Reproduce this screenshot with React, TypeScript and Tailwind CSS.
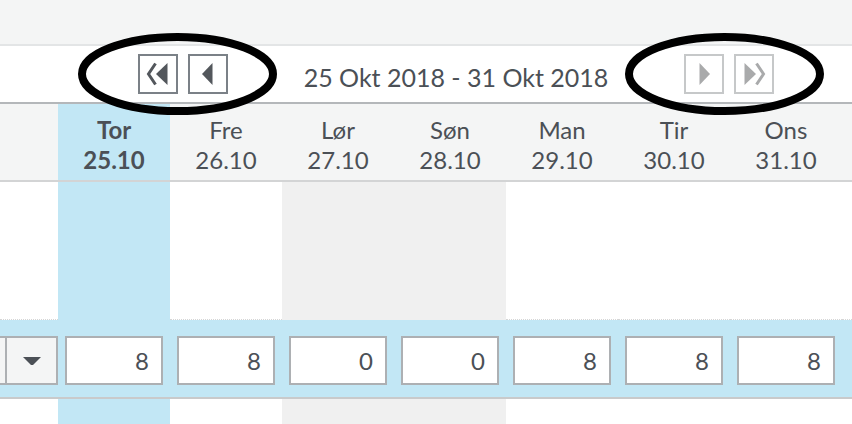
import { memo } from 'react'

type Day = {
  name: string
  date: string
  value: number
  today?: boolean
  weekend?: boolean
}

const DAYS: Day[] = [
  { name: 'Tor', date: '25.10', value: 8, today: true },
  { name: 'Fre', date: '26.10', value: 8 },
  { name: 'Lør', date: '27.10', value: 0, weekend: true },
  { name: 'Søn', date: '28.10', value: 0, weekend: true },
  { name: 'Man', date: '29.10', value: 8 },
  { name: 'Tir', date: '30.10', value: 8 },
  { name: 'Ons', date: '31.10', value: 8 },
]

function bodyBg(day: Day) {
  if (day.today) return 'bg-[#c2e7f5]'
  if (day.weekend) return 'bg-[#f0f0f0]'
  return 'bg-white'
}

function NavButton({ kind, disabled }: { kind: 'first' | 'prev' | 'next' | 'last'; disabled?: boolean }) {
  const color = disabled ? '#a9aaab' : '#53575c'
  const flip = kind === 'next' || kind === 'last'
  return (
    <button
      type="button"
      className={
        'flex h-10 w-10 items-center justify-center border-2 bg-white ' +
        (disabled ? 'border-[#c6c8c9]' : 'border-[#7b8187]')
      }
    >
      <svg width="24" height="24" viewBox="0 0 24 24" style={flip ? { transform: 'scaleX(-1)' } : undefined}>
        {kind === 'first' || kind === 'last' ? (
          <>
            <polyline points="9.5,1.5 2.5,12 9.5,22.5" fill="none" stroke={color} strokeWidth="3" />
            <polygon points="21.5,1 21.5,23 10,12" fill={color} />
          </>
        ) : (
          <polygon points="16.5,1 16.5,23 6,12" fill={color} />
        )}
      </svg>
    </button>
  )
}

function WeekNav() {
  return (
    <div className="flex h-[58px] items-center border-b-2 border-[#b4b7ba] bg-white pl-[138px]">
      <div className="flex gap-[10px]">
        <NavButton kind="first" />
        <NavButton kind="prev" />
      </div>
      <div className="w-[456px] pt-[6px] text-center text-[25px] leading-[31px]">25 Okt 2018 - 31 Okt 2018</div>
      <div className="flex gap-[10px]">
        <NavButton kind="next" disabled />
        <NavButton kind="last" disabled />
      </div>
    </div>
  )
}

function HeaderRow() {
  return (
    <div className="flex h-[78px] border-b-2 border-[#d3d4d5] bg-[#f4f5f5]">
      <div className="w-[58px] shrink-0" />
      {DAYS.map((d) => (
        <div
          key={d.name}
          className={
            'w-[112px] shrink-0 pt-[11px] text-center text-[24px] leading-[30px] ' +
            (d.today ? 'bg-[#c2e7f5] font-bold' : '')
          }
        >
          <div>{d.name}</div>
          <div>{d.date}</div>
        </div>
      ))}
      <div className="flex-1" />
    </div>
  )
}

function BodyRow({ height, dotted }: { height: string; dotted?: boolean }) {
  const line = dotted ? ' border-b border-dotted border-[#d6d6d6]' : ''
  return (
    <div className={'flex ' + height}>
      <div className={'w-[58px] shrink-0 bg-white' + line} />
      {DAYS.map((d) => (
        <div
          key={d.name}
          className={'w-[112px] shrink-0 ' + bodyBg(d) + (d.today || d.weekend ? '' : line)}
        />
      ))}
      <div className={'flex-1 bg-white' + line} />
    </div>
  )
}

function HoursRow() {
  return (
    <div className="flex h-[79px] border-b-2 border-[#c9cacb] bg-[#c2e7f5] pt-[16px]">
      <div className="w-[58px] shrink-0">
        <div className="flex h-[49px] border-y-2 border-r-2 border-[#adb0b3] bg-[#f4f5f5]">
          <div className="w-[7px] border-r-2 border-[#adb0b3]" />
          <div className="flex flex-1 items-center justify-center">
            <svg width="18" height="10" viewBox="0 0 18 10">
              <polygon points="0,1 18,1 10,9 8,9" fill="#4b5056" />
            </svg>
          </div>
        </div>
      </div>
      {DAYS.map((d) => (
        <div key={d.name} className="w-[112px] shrink-0 px-[7px]">
          <input
            type="text"
            readOnly
            value={d.value}
            className="h-[49px] w-full border-2 border-[#adb0b3] bg-white pr-3 text-right font-['Lato'] text-[24px] text-[#4b5056] outline-none"
          />
        </div>
      ))}
      <div className="flex-1" />
    </div>
  )
}

function App() {
  return (
    <div className="relative h-[424px] w-[852px] overflow-hidden bg-white font-['Lato',sans-serif] text-[#4b5056]">
      <div className="h-[46px] border-b-2 border-[#e3e5e6] bg-[#f4f5f5]" />
      <WeekNav />
      <HeaderRow />
      <BodyRow height="h-[138px]" dotted />
      <HoursRow />
      <BodyRow height="h-[40px]" />

      {/* annotation rings drawn over the nav buttons */}
      <svg className="pointer-events-none absolute left-0 top-0" width="852" height="424">
        <ellipse cx="177.5" cy="74" rx="95.5" ry="37" fill="none" stroke="#000" strokeWidth="8" />
        <ellipse cx="724.5" cy="74" rx="95.5" ry="37" fill="none" stroke="#000" strokeWidth="8" />
      </svg>
    </div>
  )
}

export default memo(App)
